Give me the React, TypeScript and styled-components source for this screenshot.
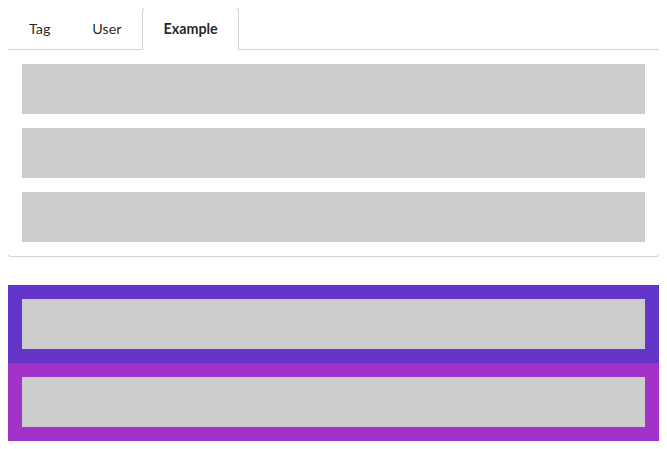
import React, { useState } from "react";
import styled, { createGlobalStyle } from "styled-components";

const Global = createGlobalStyle`
  html, body { margin: 0; padding: 0; background: #fff; }
  body { margin: 8px; font-family: Lato, "Open Sans", "Liberation Sans", sans-serif; font-size: 14px; color: rgba(0,0,0,0.87); }
`;

const TabMenu = styled.div`
  display: flex;
  align-items: flex-end;
  height: 42px;
  border-bottom: 1px solid #d4d4d5;
  margin: -1px -1px 0;
  padding: 0 0 0 1px;
`;

const TabItem = styled.button<{ $active?: boolean }>`
  box-sizing: border-box;
  height: 43px;
  display: flex;
  align-items: center;
  font-family: inherit;
  font-size: 14.3px;
  line-height: 1;
  padding: 0 20px;
  background: ${(p) => (p.$active ? "#fff" : "transparent")};
  color: rgba(0, 0, 0, 0.87);
  font-weight: ${(p) => (p.$active ? 700 : 400)};
  border: 1px solid ${(p) => (p.$active ? "#d4d4d5" : "transparent")};
  border-bottom: none;
  border-radius: 4px 4px 0 0;
  margin-bottom: -1px;
  cursor: pointer;
`;

const Panel = styled.div`
  border: 1px solid #d4d4d5;
  border-top: none;
  border-radius: 0 0 4px 4px;
  margin: 0 -1px;
  padding: 14px;
  display: flex;
  flex-direction: column;
  gap: 14px;
`;

const Bar = styled.div`
  height: 50px;
  background: #cccccc;
`;

const Colored = styled.div<{ $color: string }>`
  background: ${(p) => p.$color};
  padding: 14px;
`;

const Stack = styled.div`
  margin-top: 28px;
  display: flex;
  flex-direction: column;
`;

export default function App() {
  const [tab, setTab] = useState("Example");
  return (
    <>
      <Global />
      <TabMenu>
        {["Tag", "User", "Example"].map((t) => (
          <TabItem key={t} $active={tab === t} onClick={() => setTab(t)}>
            {t}
          </TabItem>
        ))}
      </TabMenu>
      <Panel>
        <Bar />
        <Bar />
        <Bar />
      </Panel>
      <Stack>
        <Colored $color="#6435c9">
          <Bar />
        </Colored>
        <Colored $color="#a333c8">
          <Bar />
        </Colored>
      </Stack>
    </>
  );
}
